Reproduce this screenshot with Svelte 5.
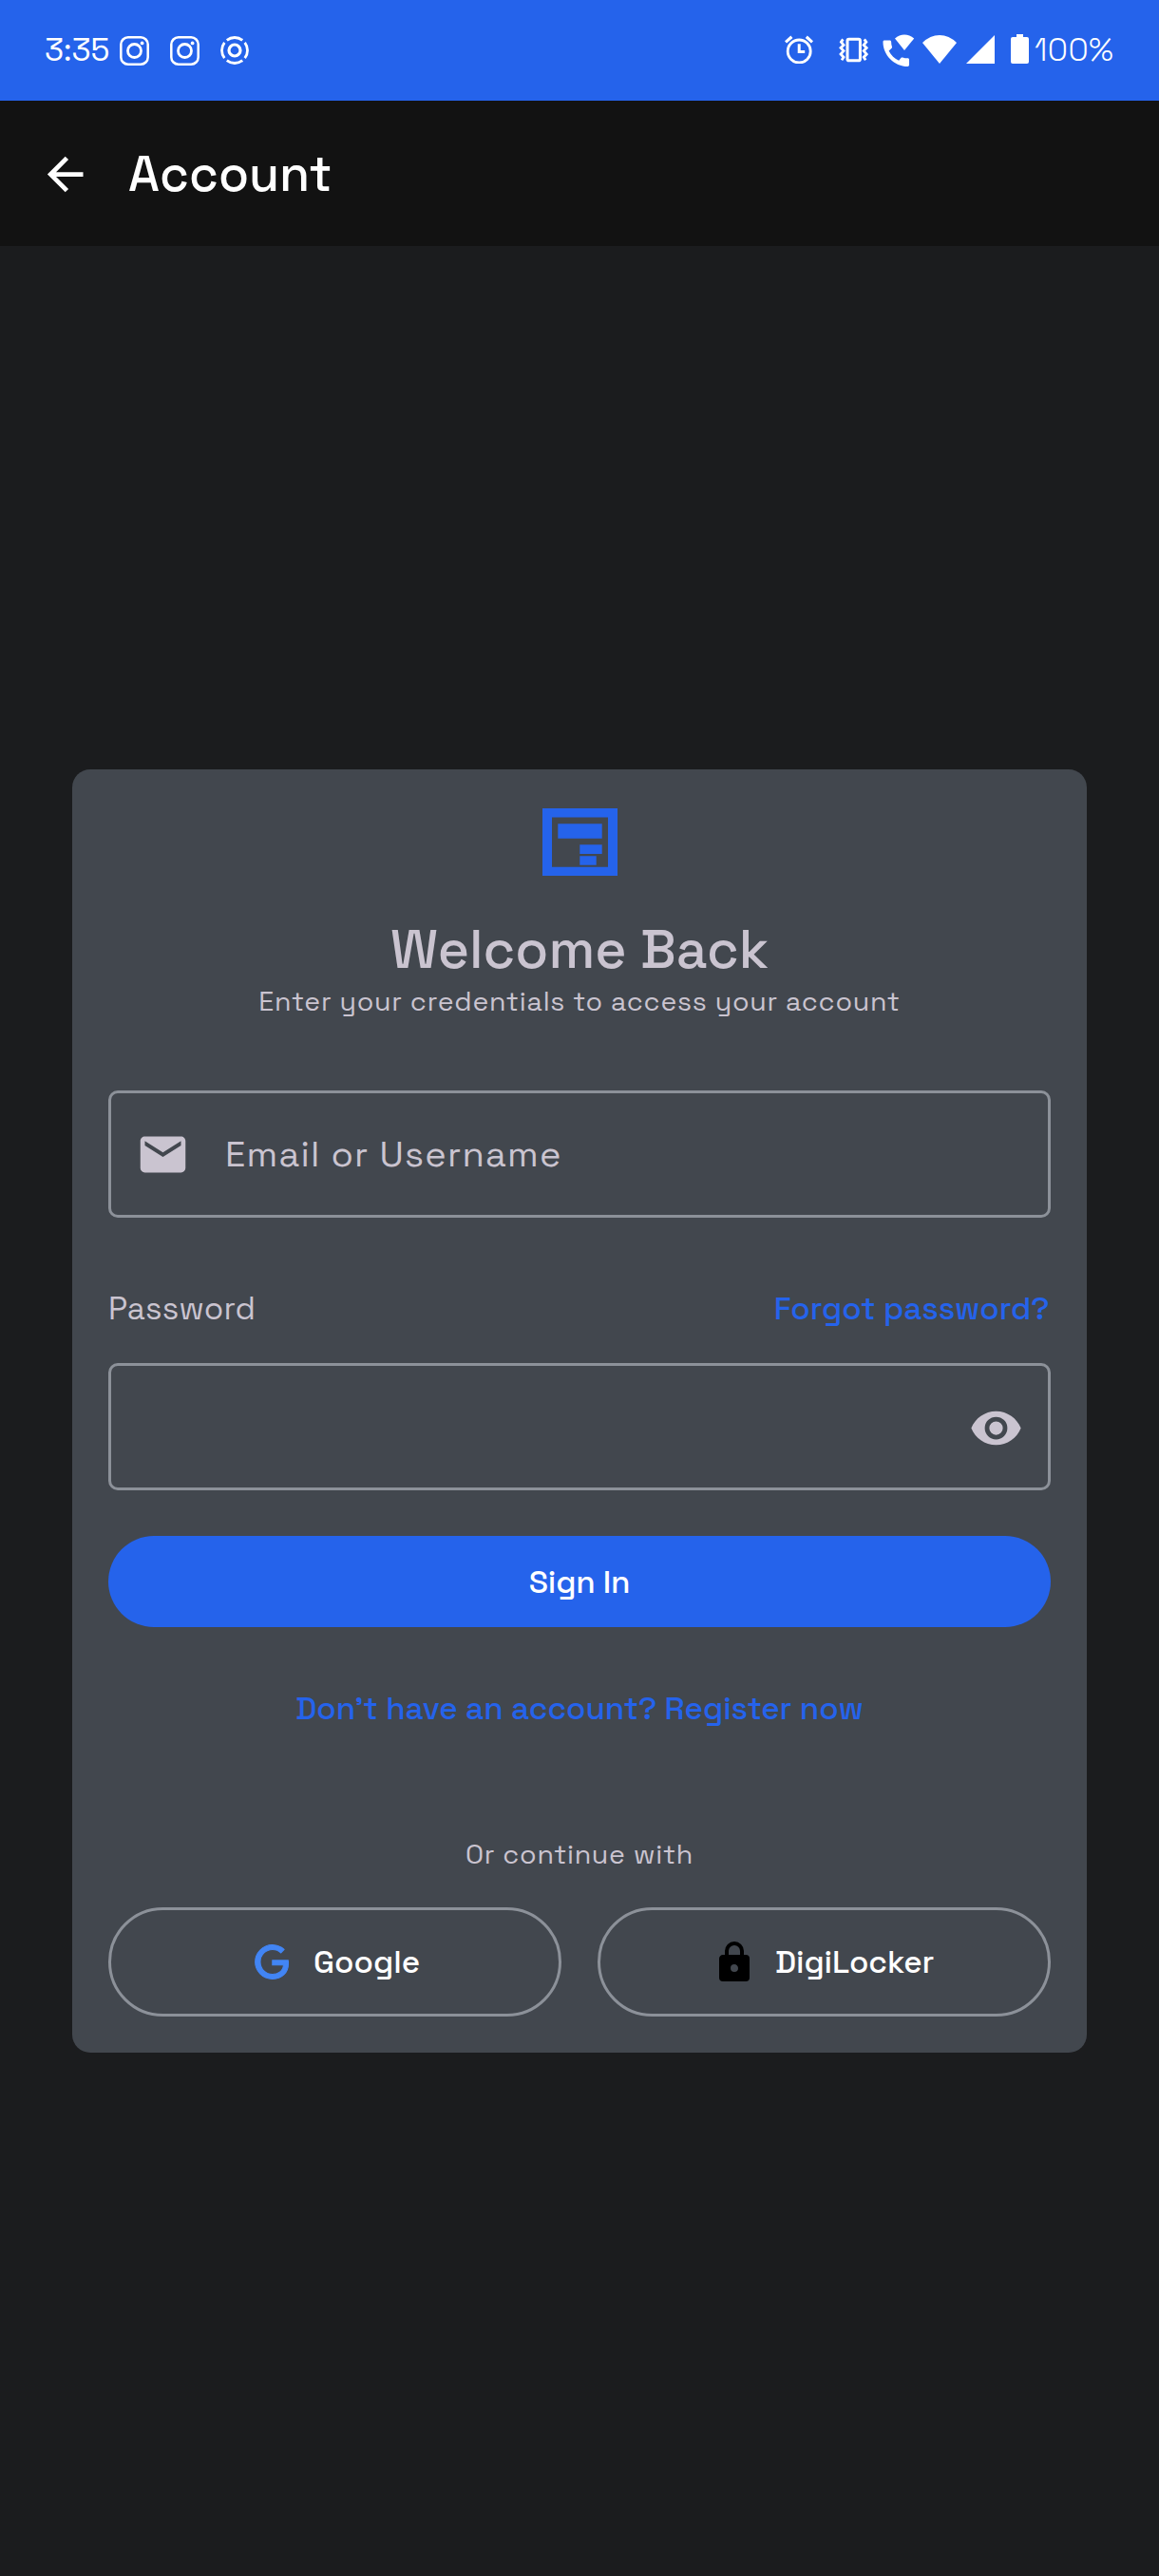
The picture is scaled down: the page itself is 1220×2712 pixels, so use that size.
<script>
  let email = $state('');
  let password = $state('');
</script>

<div class="screen">
  <header class="status">
    <span class="clock">3:35</span>
    <svg class="insta" viewBox="0 0 31 31" width="31" height="31">
      <rect x="1.3" y="1.3" width="28.4" height="28.4" rx="7.5" fill="none" stroke="#fff" stroke-width="2.5" />
      <circle cx="15.5" cy="15.5" r="7" fill="none" stroke="#fff" stroke-width="2.8" />
      <circle cx="23.6" cy="7.4" r="1.9" fill="#fff" />
    </svg>
    <svg class="insta second" viewBox="0 0 31 31" width="31" height="31">
      <rect x="1.3" y="1.3" width="28.4" height="28.4" rx="7.5" fill="none" stroke="#fff" stroke-width="2.5" />
      <circle cx="15.5" cy="15.5" r="7" fill="none" stroke="#fff" stroke-width="2.8" />
      <circle cx="23.6" cy="7.4" r="1.9" fill="#fff" />
    </svg>
    <svg class="ring" viewBox="0 0 30 30" width="30" height="30" fill="none" stroke="#fff">
      <circle cx="15" cy="15" r="6" stroke-width="3.2" />
      <g stroke-width="2.8">
        <path d="M6.8 4.3A13.4 13.4 0 0 1 23.2 4.3" />
        <path d="M6.8 25.7A13.4 13.4 0 0 0 23.2 25.7" />
        <path d="M4.3 6.8A13.4 13.4 0 0 0 4.3 23.2" />
        <path d="M25.7 6.8A13.4 13.4 0 0 1 25.7 23.2" />
      </g>
    </svg>

    <svg class="alarm" viewBox="0 0 30 30" width="30" height="30" fill="none" stroke="#fff">
      <circle cx="15.2" cy="17" r="12" stroke-width="2.8" />
      <path d="M15.2 9.2V17.6H21.2" stroke-width="3" />
      <path d="M1 7.4L7.4 1.8M29 7.4L22.8 1.8" stroke-width="3.2" />
    </svg>
    <svg class="vibrate" viewBox="0 0 31 27" width="31" height="27" fill="none" stroke="#fff">
      <rect x="9" y="2.2" width="13.4" height="22.6" rx="1.6" stroke-width="3" />
      <path d="M4.4 2.4L2.4 5.2L5 8.4L2 11.4L5 14.6L2 18L5 21.2L3 24.2" stroke-width="2.8" />
      <path d="M26.8 2.4L28.8 5.2L26.2 8.4L29.2 11.4L26.2 14.6L29.2 18L26.2 21.2L28.2 24.2" stroke-width="2.8" />
    </svg>
    <svg class="wificall" viewBox="0 0 34 34" width="34" height="34" fill="#fff">
      <path
        transform="translate(-4.1 1.8) scale(1.53)"
        d="M20.01 15.38c-1.23 0-2.42-.2-3.53-.56-.35-.12-.74-.03-1.01.24l-1.57 1.97c-2.83-1.35-5.48-3.9-6.89-6.83l1.95-1.66c.27-.28.35-.67.24-1.02-.37-1.11-.56-2.3-.56-3.53 0-.54-.45-.99-.99-.99H4.19C3.65 3 3 3.24 3 3.99 3 13.28 10.73 21 20.01 21c.71 0 .99-.63.99-1.18v-3.45c0-.54-.45-.99-.99-.99z"
      />
      <path d="M23 17L13 4.4Q17.5 .6 23 .6T33.2 4.4Z" />
    </svg>
    <svg class="wifi" viewBox="0 0 36 30" width="36" height="30" fill="#fff">
      <path d="M18 30L0 8Q8 0 18 0T36 8Z" />
    </svg>
    <svg class="signal" viewBox="0 0 30 30" width="30" height="30" fill="#fff">
      <path d="M30 0V30H0Z" />
    </svg>
    <svg class="battery" viewBox="0 0 19 31" width="19" height="31" fill="#fff">
      <path d="M6 0H13V3H17A2 2 0 0 1 19 5V29A2 2 0 0 1 17 31H2A2 2 0 0 1 0 29V5A2 2 0 0 1 2 3H6Z" />
    </svg>
    <span class="percent">100%</span>
  </header>

  <nav class="appbar">
    <svg viewBox="0 0 24 24" width="57" height="57" fill="#fff">
      <path d="M20 11V13H8L13.5 18.5L12.08 19.92L4.16 12L12.08 4.08L13.5 5.5L8 11H20Z" />
    </svg>
    <h1>Account</h1>
  </nav>

  <main class="card">
    <svg class="logo" viewBox="0 0 79 71" width="79" height="71" fill="#2563eb">
      <path fill-rule="evenodd" d="M0 0H79V71H0ZM10 9.5V61.7H69V9.5Z" />
      <path d="M16.3 16.3H62.7V31.7H16.3ZM39.3 38.3H62.7V48H39.3ZM39.3 50.3H56.7V59.7H39.3Z" />
    </svg>
    <h2>Welcome Back</h2>
    <p class="sub">Enter your credentials to access your account</p>

    <label class="field">
      <svg viewBox="0 0 24 24" width="57" height="57" fill="#cac4d0">
        <path d="M20 8L12 13L4 8V6L12 11L20 6M20 4H4C2.89 4 2 4.89 2 6V18A2 2 0 0 0 4 20H20A2 2 0 0 0 22 18V6C22 4.89 21.1 4 20 4Z" />
      </svg>
      <input type="text" placeholder="Email or Username" bind:value={email} />
    </label>

    <div class="row">
      <span class="pw">Password</span>
      <span class="link forgot">Forgot password?</span>
    </div>

    <label class="field password">
      <input type="password" bind:value={password} />
      <svg viewBox="0 0 24 24" width="57" height="57" fill="#cac4d0">
        <path d="M12 9A3 3 0 0 0 9 12A3 3 0 0 0 12 15A3 3 0 0 0 15 12A3 3 0 0 0 12 9M12 17A5 5 0 0 1 7 12A5 5 0 0 1 12 7A5 5 0 0 1 17 12A5 5 0 0 1 12 17M12 4.5C7 4.5 2.73 7.61 1 12C2.73 16.39 7 19.5 12 19.5C17 19.5 21.27 16.39 23 12C21.27 7.61 17 4.5 12 4.5Z" />
      </svg>
    </label>

    <button class="signin">Sign In</button>
    <p class="link register">Don’t have an account? Register now</p>
    <p class="or">Or continue with</p>

    <div class="providers">
      <button class="provider google">
        <svg viewBox="0 0 24 24" width="43" height="43" fill="#4285f4">
          <path d="M21.35 11.1H12.18V13.83H18.69C18.36 17.64 15.19 19.27 12.19 19.27C8.36 19.27 5 16.25 5 12C5 7.9 8.2 4.73 12.2 4.73C15.29 4.73 17.1 6.7 17.1 6.7L19 4.72C19 4.72 16.56 2 12.1 2C6.42 2 2.03 6.8 2.03 12C2.03 17.05 6.16 22 12.25 22C17.6 22 21.5 18.33 21.5 12.91C21.5 11.76 21.35 11.1 21.35 11.1Z" stroke="#4285f4" stroke-width="0.6" />
        </svg>
        <span>Google</span>
      </button>
      <button class="provider digi">
        <svg viewBox="0 0 24 24" width="48" height="48" fill="#000">
          <path d="M12 17A2 2 0 0 0 14 15C14 13.89 13.1 13 12 13A2 2 0 0 0 10 15A2 2 0 0 0 12 17M18 8A2 2 0 0 1 20 10V20A2 2 0 0 1 18 22H6A2 2 0 0 1 4 20V10C4 8.89 4.9 8 6 8H7V6A5 5 0 0 1 12 1A5 5 0 0 1 17 6V8H18M12 3A3 3 0 0 0 9 6V8H15V6A3 3 0 0 0 12 3Z" />
        </svg>
        <span>DigiLocker</span>
      </button>
    </div>
  </main>
</div>

<style>
  :global(body) {
    background: #1b1c1e;
  }
  .screen {
    width: 1220px;
    height: 2712px;
    box-sizing: border-box;
    background: #1b1c1e;
    font-family: 'Space Grotesk', Inter, Roboto, sans-serif;
    color: #cac4d0;
    overflow: hidden;
  }
  h1, h2, p {
    margin: 0;
    font-weight: 500;
    white-space: nowrap;
  }
  svg {
    display: block;
    flex: none;
  }

  .status {
    height: 106px;
    display: flex;
    align-items: flex-start;
    background: #2563eb;
    color: #fff;
    white-space: nowrap;
  }
  .clock {
    width: 79px;
    margin: 32px 0 0 47px;
    font-size: 33.25px;
    line-height: 41px;
  }
  .insta { margin-top: 38px; }
  .second { margin-left: 22px; }
  .ring { margin: 38px 0 0 22px; }
  .alarm { margin: 37px 0 0 564px; }
  .vibrate { margin: 39px 0 0 27px; }
  .wificall { margin: 36px 0 0 15px; }
  .wifi { margin: 37px 0 0 8px; }
  .signal { margin: 37px 0 0 10px; }
  .battery { margin: 36px 0 0 17px; }
  .percent {
    margin: 32px 0 0 6px;
    font-size: 33.25px;
    font-weight: 300;
    line-height: 41px;
    letter-spacing: 0.4px;
  }

  .appbar {
    height: 153px;
    display: flex;
    align-items: center;
    padding-left: 40px;
    background: #121212;
    color: #fff;
  }
  .appbar svg { margin-top: 2px; }
  h1 {
    margin: 2px 0 0 38px;
    font-size: 52.25px;
    line-height: 65px;
  }

  .card {
    width: 1068px;
    height: 1351px;
    box-sizing: border-box;
    margin: 551px auto 0;
    padding: 41px 38px 0;
    display: flex;
    flex-direction: column;
    border-radius: 19px;
    background: #42474e;
  }
  .logo { margin-left: 457px; }
  h2 {
    margin: 43px 0 -1px;
    font-size: 57px;
    line-height: 70px;
    text-align: center;
  }
  .sub {
    font-size: 28.5px;
    font-weight: 400;
    line-height: 40px;
    letter-spacing: 0.76px;
    text-align: center;
  }
  .field {
    height: 134px;
    box-sizing: border-box;
    margin-top: 74px;
    display: flex;
    align-items: center;
    border: 3px solid #8c9199;
    border-radius: 10px;
    padding: 0 26px;
  }
  input {
    flex: 1;
    min-width: 0;
    margin-left: 37px;
    padding: 0;
    border: 0;
    outline: 0;
    background: none;
    font: 400 38px/60px 'Space Grotesk', Inter, Roboto, sans-serif;
    letter-spacing: 1.19px;
    color: #cac4d0;
  }
  input::placeholder {
    color: #cac4d0;
    opacity: 1;
  }
  .row {
    margin-top: 75px;
    display: flex;
    justify-content: space-between;
    font-size: 33.25px;
    line-height: 41px;
  }
  .pw { letter-spacing: 0.2px; }
  .link {
    color: #2563eb;
    font-weight: 500;
  }
  .forgot { margin-right: 1.5px; }
  .password { margin-top: 37px; }
  .password svg { transform: translateY(1px); }
  button {
    border: 0;
    padding: 0;
    font: 500 33.25px/41px 'Space Grotesk', Inter, Roboto, sans-serif;
    color: #fff;
  }
  .signin {
    height: 96px;
    flex: none;
    margin-top: 48px;
    border-radius: 48px;
    background: #2563eb;
    letter-spacing: -0.2px;
  }
  .register {
    margin-top: 65px;
    font-size: 33.25px;
    line-height: 41px;
    letter-spacing: -0.05px;
    text-align: center;
  }
  .or {
    margin-top: 113px;
    font-size: 28.5px;
    font-weight: 400;
    line-height: 40px;
    letter-spacing: 0.74px;
    text-align: center;
  }
  .providers {
    margin-top: 36px;
    display: grid;
    grid-template-columns: 1fr 1fr;
    gap: 38px;
  }
  .provider {
    height: 115px;
    box-sizing: border-box;
    display: flex;
    align-items: center;
    border: 3px solid #8c9199;
    border-radius: 58px;
    background: none;
  }
  .google {
    padding-left: 148px;
    gap: 22px;
  }
  .digi {
    padding-left: 117px;
    gap: 19px;
    letter-spacing: -0.1px;
  }
</style>
